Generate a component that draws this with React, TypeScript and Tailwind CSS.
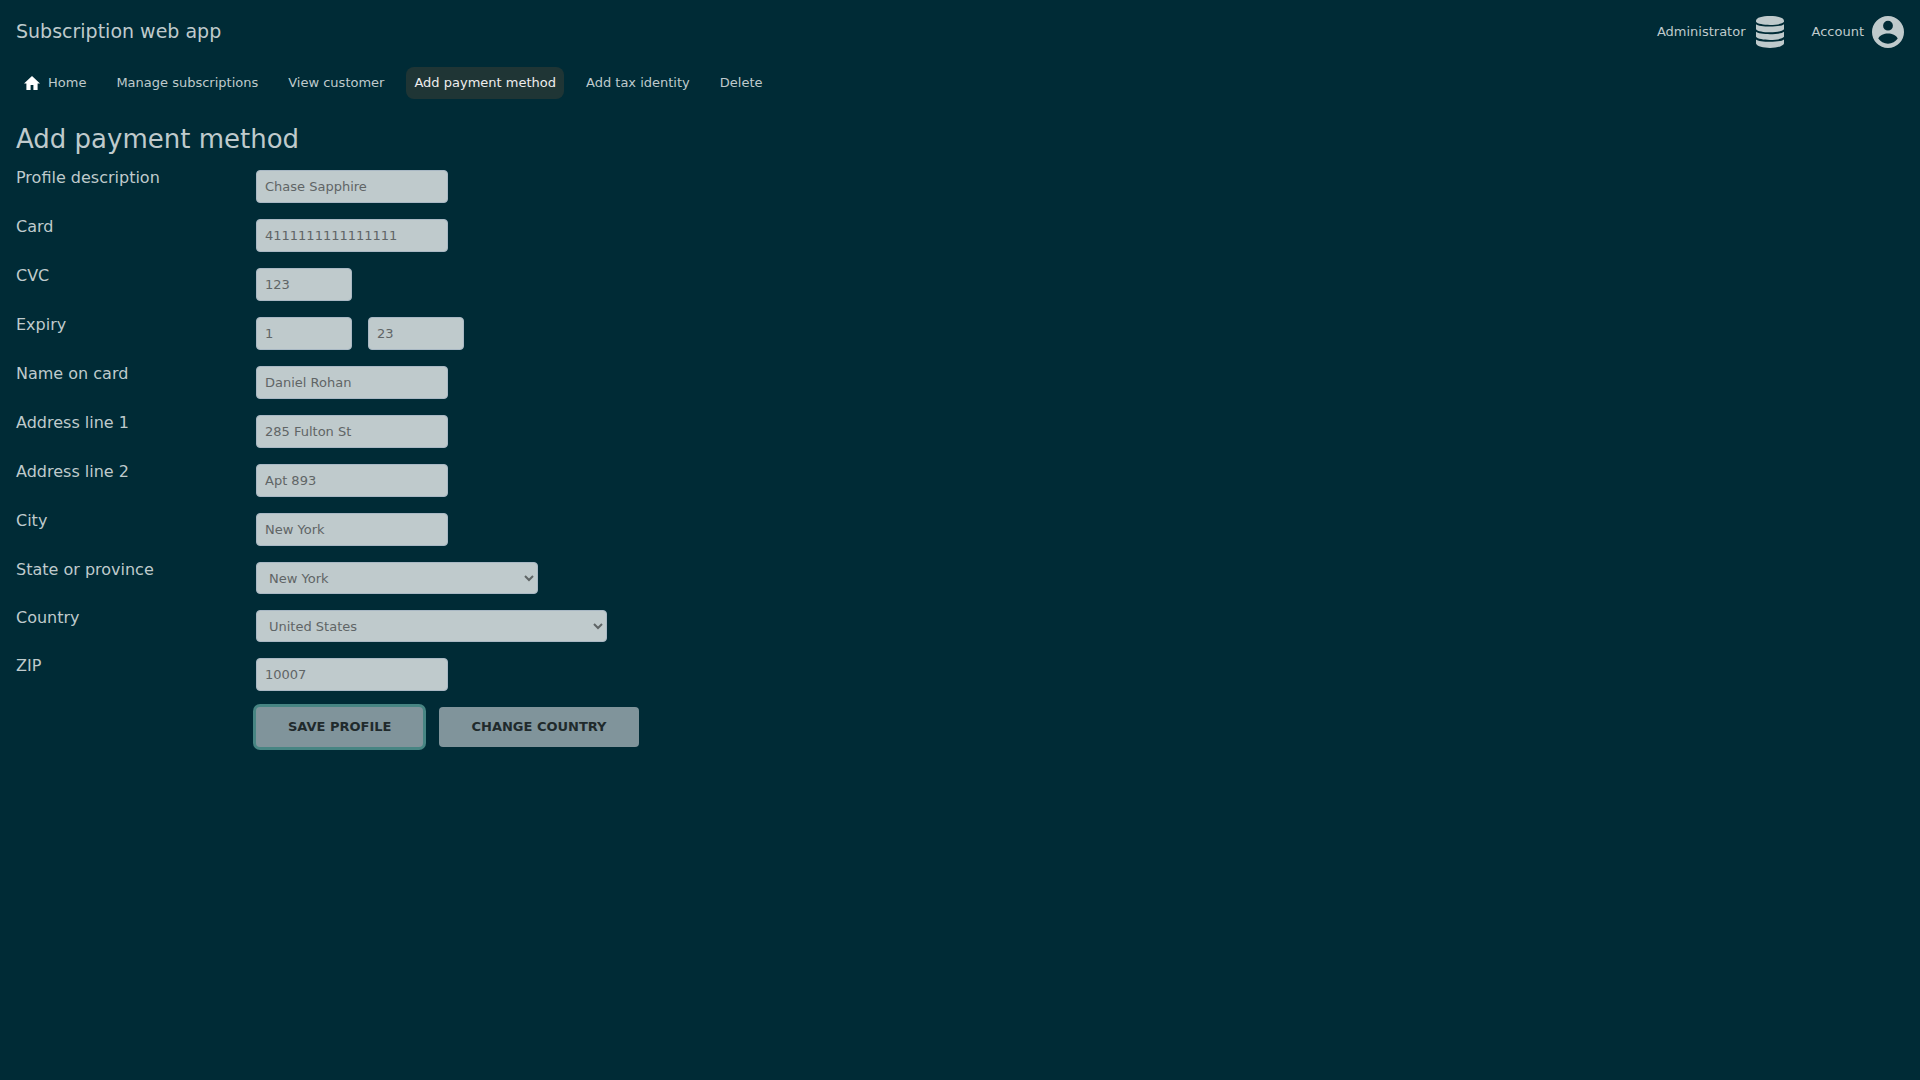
import React from "react";

const box =
  "rounded border border-[#a9b8c4] bg-[#bfcacc] text-[13px] text-[#5f6566] focus:outline-2 focus:outline-[#478583]";
const button =
  "h-10 cursor-pointer rounded bg-[#80949b] px-8 text-[13px] font-bold text-[#1f2a2c]";

function HomeIcon() {
  return (
    <svg viewBox="0 0 16 14" className="h-[14px] w-4" fill="#ffffff" aria-hidden="true">
      <path d="M8 0 0 7.4h2.4V14H6.6V9h2.8v5h4.2V7.4H16z" />
    </svg>
  );
}

function DatabaseIcon() {
  return (
    <svg viewBox="0 0 28 32" className="h-8 w-7" fill="currentColor" aria-hidden="true">
      <path d="M0 4.8C0 1.6 6.3 0 14 0s14 1.6 14 4.8v1C25.5 10 2.5 10 0 5.8z" />
      <path d="M0 8.2c3 3.2 25 3.2 28 0v5c-3 4.2-25 4.2-28 0z" />
      <path d="M0 15.8c3 3.2 25 3.2 28 0v5c-3 4.2-25 4.2-28 0z" />
      <path d="M0 23.4c3 3.2 25 3.2 28 0v4.2C26 33.4 2 33.4 0 27.6z" />
    </svg>
  );
}

function AccountIcon() {
  return (
    <svg viewBox="0 0 32 32" className="size-8" fill="currentColor" aria-hidden="true">
      <path
        fillRule="evenodd"
        d="M16 0a16 16 0 1 0 0 32 16 16 0 0 0 0-32zm0 4.8a4.9 4.9 0 1 1 0 9.8 4.9 4.9 0 0 1 0-9.8zm0 22.9c-4.1 0-7.7-2.1-9.7-5.2 1.4-3.3 5.7-5 9.7-5s8.3 1.7 9.7 5c-2 3.1-5.6 5.2-9.7 5.2z"
      />
    </svg>
  );
}

const links = ["Manage subscriptions", "View customer", "Add payment method", "Add tax identity", "Delete"];

function Row({ label, id, children }: { label: string; id: string; children: React.ReactNode }) {
  return (
    <div className="flex items-start">
      <label htmlFor={id} className="w-60 shrink-0 text-base leading-4">
        {label}
      </label>
      <div className="flex gap-4">{children}</div>
    </div>
  );
}

function TextBox({ id, value, short, label }: { id: string; value: string; short?: boolean; label?: string }) {
  return (
    <input
      id={id}
      type="text"
      defaultValue={value}
      aria-label={label}
      className={`${box} h-[33px] px-2 ${short ? "w-24" : "w-48"}`}
    />
  );
}

export default function App() {
  return (
    <div className="min-h-screen bg-[#002b36] font-['DejaVu_Sans',sans-serif] text-[#bfcacc]">
      <header className="flex items-start justify-between px-4 pt-4">
        <a href="#" className="text-[19px] leading-[30px]">
          Subscription web app
        </a>
        <div className="flex gap-7 text-[13px]">
          <a href="#" className="flex items-center gap-2.5">
            Administrator
            <DatabaseIcon />
          </a>
          <a href="#" className="flex items-center gap-2">
            Account
            <AccountIcon />
          </a>
        </div>
      </header>
      <nav className="mt-[19px] flex gap-3.5 px-4 text-[13px] leading-8">
        <a href="#" className="flex items-center gap-2 rounded-lg px-2">
          <HomeIcon />
          Home
        </a>
        {links.map((text) => (
          <a
            key={text}
            href="#"
            aria-current={text === "Add payment method" ? "page" : undefined}
            className="rounded-lg px-2 aria-[current=page]:bg-[#1f3535] aria-[current=page]:text-[#eeeeee]"
          >
            {text}
          </a>
        ))}
      </nav>
      <main className="px-4 pt-5">
        <h1 className="text-[26px] leading-10">Add payment method</h1>
        <form className="mt-[11px] flex flex-col gap-4" onSubmit={(e) => e.preventDefault()}>
          <Row id="description" label="Profile description">
            <TextBox id="description" value="Chase Sapphire" />
          </Row>
          <Row id="card" label="Card">
            <TextBox id="card" value="4111111111111111" />
          </Row>
          <Row id="cvc" label="CVC">
            <TextBox id="cvc" value="123" short />
          </Row>
          <Row id="month" label="Expiry">
            <TextBox id="month" value="1" short />
            <TextBox id="year" value="23" short label="Expiry year" />
          </Row>
          <Row id="name" label="Name on card">
            <TextBox id="name" value="Daniel Rohan" />
          </Row>
          <Row id="line1" label="Address line 1">
            <TextBox id="line1" value="285 Fulton St" />
          </Row>
          <Row id="line2" label="Address line 2">
            <TextBox id="line2" value="Apt 893" />
          </Row>
          <Row id="city" label="City">
            <TextBox id="city" value="New York" />
          </Row>
          <Row id="state" label="State or province">
            <select id="state" className={`${box} h-8 w-[282px] px-2`}>
              <option>New York</option>
            </select>
          </Row>
          <Row id="country" label="Country">
            <select id="country" className={`${box} h-8 w-[351px] px-2`}>
              <option>United States</option>
            </select>
          </Row>
          <Row id="zip" label="ZIP">
            <TextBox id="zip" value="10007" />
          </Row>
          <div className="flex gap-4 pl-60">
            <button type="submit" className={`${button} ring-3 ring-[#478583]`}>
              SAVE PROFILE
            </button>
            <button type="button" className={button}>
              CHANGE COUNTRY
            </button>
          </div>
        </form>
      </main>
    </div>
  );
}
